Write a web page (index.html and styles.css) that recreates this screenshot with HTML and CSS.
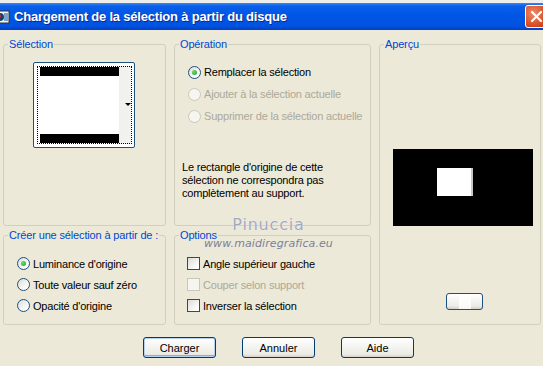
FILE: index.html
```html
<!DOCTYPE html>
<html lang="fr">
<head>
    <meta charset="UTF-8">
    <title>Chargement de la sélection à partir du disque</title>
    <link rel="stylesheet" href="styles.css">
</head>
<body>
    <div class="window">
        <div class="titlebar">
            <svg class="app-icon" width="16" height="16" viewBox="0 0 16 16">
                <rect x="1" y="2" width="14" height="12" fill="#f4f4f4" stroke="#333" stroke-width="1"/>
                <circle cx="6" cy="8" r="4" fill="#1b3d6e"/>
                <circle cx="5" cy="7" r="2" fill="#c0392b"/>
                <rect x="10" y="4" width="4" height="8" fill="#6fa6d8"/>
            </svg>
            <span class="title">Chargement de la sélection à partir du disque</span>
            <span class="close-btn">
                <svg width="21" height="21" viewBox="0 0 21 21">
                    <path d="M6 6 L15 15 M15 6 L6 15" stroke="#fff" stroke-width="2.2" stroke-linecap="round"/>
                </svg>
            </span>
        </div>

        <div class="dialog">
            <div class="groups">
                <fieldset class="group g-selection">
                    <legend>Sélection</legend>
                    <div class="sel-thumb">
                        <div class="thumb-img">
                            <div class="bar"></div>
                            <div class="bar"></div>
                        </div>
                        <span class="thumb-arrow"></span>
                    </div>
                </fieldset>

                <fieldset class="group g-operation">
                    <legend>Opération</legend>
                    <div class="choices">
                        <label class="choice"><span class="radio checked"></span>Remplacer la sélection</label>
                        <label class="choice disabled"><span class="radio"></span>Ajouter à la sélection actuelle</label>
                        <label class="choice disabled"><span class="radio"></span>Supprimer de la sélection actuelle</label>
                    </div>
                    <p class="note">Le rectangle d'origine de cette<br>sélection ne correspondra pas<br>complètement au support.</p>
                </fieldset>

                <fieldset class="group g-preview">
                    <legend>Aperçu</legend>
                    <div class="preview">
                        <div class="preview-rect"></div>
                    </div>
                    <span class="mini-btn"></span>
                </fieldset>

                <fieldset class="group g-source">
                    <legend>Créer une sélection à partir de :</legend>
                    <div class="choices tight">
                        <label class="choice"><span class="radio checked"></span>Luminance d'origine</label>
                        <label class="choice"><span class="radio"></span>Toute valeur sauf zéro</label>
                        <label class="choice"><span class="radio"></span>Opacité d'origine</label>
                    </div>
                </fieldset>

                <fieldset class="group g-options">
                    <legend>Options</legend>
                    <div class="choices tight">
                        <label class="choice"><span class="check"></span>Angle supérieur gauche</label>
                        <label class="choice disabled"><span class="check"></span>Couper selon support</label>
                        <label class="choice"><span class="check"></span>Inverser la sélection</label>
                    </div>
                </fieldset>
            </div>

            <div class="buttons">
                <button class="btn default">Charger</button>
                <button class="btn">Annuler</button>
                <button class="btn">Aide</button>
            </div>

            <div class="watermark">
                <span class="wm-name">Pinuccia</span>
                <span class="wm-site">www.maidiregrafica.eu</span>
            </div>
        </div>
    </div>
</body>
</html>
```

FILE: styles.css
```css
body {
    margin: 0;
    background: #ece9d8;
    font-family: 'Liberation Sans', Arial, sans-serif;
    font-size: 11px;
    color: #000;
    overflow: hidden;
}
.window {
    width: 543px;
    height: 366px;
    border-top: 3px solid #eeeeea;
    box-sizing: border-box;
    overflow: hidden;
}
.titlebar {
    height: 27px;
    display: flex;
    align-items: center;
    background: linear-gradient(#3b86f2 0, #0a5fe8 3px, #0056e6 45%, #0052e0 85%, #0041c4 100%);
    color: #fff;
}
.app-icon {
    margin-left: -6px;
    flex: none;
}
.title {
    margin-left: 4px;
    font-weight: bold;
    font-size: 13px;
    letter-spacing: -0.2px;
    text-shadow: 1px 1px 0 #0a2a8a;
    flex: 1;
    white-space: nowrap;
}
.close-btn {
    flex: none;
    width: 21px;
    height: 21px;
    margin-right: -5px;
    border: 1px solid #fff;
    border-radius: 3px;
    background: radial-gradient(circle at 35% 35%, #ee8b6a, #d6461d 70%, #c2390f);
    display: flex;
}
.dialog {
    position: relative;
    padding: 8px 0 0 3px;
}
.groups {
    display: grid;
    grid-template-columns: 163px 197px 162px;
    grid-template-rows: 188px 96px;
    column-gap: 8px;
    row-gap: 3px;
}
.group {
    margin: 0;
    padding: 0;
    min-width: 0;
    border: 1px solid #d0d0bf;
    border-radius: 3px;
    box-sizing: border-box;
}
.group legend {
    color: #0046d5;
    line-height: 13px;
    padding: 0 1px;
    margin-left: 4px;
    letter-spacing: -0.15px;
}
.g-preview {
    grid-column: 3;
    grid-row: 1 / span 2;
}

/* Sélection */
.sel-thumb {
    position: relative;
    margin: 11px 0 0 29px;
    width: 102px;
    height: 86px;
    box-sizing: border-box;
    border: 1px solid #1c5180;
    border-radius: 2px;
    background: #fff;
    padding: 3px;
}
.thumb-img {
    box-sizing: border-box;
    height: 78px;
    width: 95px;
    border: 1px dotted #000;
    display: flex;
    flex-direction: column;
    justify-content: space-between;
    padding: 0 12px 0 2px;
    background: linear-gradient(90deg, #fff 0 81px, #f1f1ee 81px);
}
.bar {
    height: 9px;
    background: #000;
}
.thumb-arrow {
    position: absolute;
    right: 3px;
    top: 40px;
    border-left: 3px solid transparent;
    border-right: 3px solid transparent;
    border-top: 3px solid #000;
}

/* choices */
.choices {
    margin-top: 10px;
    padding-left: 13px;
    letter-spacing: -0.2px;
}
.choices.tight {
    margin-top: 11px;
}
.choice {
    display: flex;
    align-items: center;
    height: 22px;
    white-space: nowrap;
}
.tight .choice {
    height: 21px;
}
.g-options .choices {
    padding-left: 12px;
}
.choice.disabled {
    color: #aca899;
}
.radio, .check {
    flex: none;
    width: 13px;
    height: 13px;
    box-sizing: border-box;
    margin-right: 3px;
    border: 1px solid #1c5180;
    display: flex;
    align-items: center;
    justify-content: center;
}
.radio {
    border-radius: 50%;
    background: linear-gradient(135deg, #dcdcd4, #fff 80%);
}
.check {
    background: linear-gradient(135deg, #dcdcd7, #fff 85%);
}
.disabled .radio, .disabled .check {
    border-color: #cac8bb;
    background: #f6f5f0;
}
.radio.checked::after {
    content: "";
    width: 5px;
    height: 5px;
    border-radius: 50%;
    background: radial-gradient(circle at 35% 35%, #6ddb6d, #21a121);
}
.note {
    margin: 34px 0 0 7px;
    line-height: 13px;
    letter-spacing: -0.2px;
}

/* Aperçu */
.preview {
    margin: 98px 0 0 13px;
    width: 140px;
    height: 77px;
    background: #000;
    padding: 19px 0 0 44px;
    box-sizing: border-box;
}
.preview-rect {
    width: 36px;
    height: 28px;
    background: linear-gradient(90deg, #fff 34px, #c8c8c8 34px);
}
.mini-btn {
    display: block;
    margin: 67px 0 0 66px;
    width: 37px;
    height: 17px;
    box-sizing: border-box;
    border: 1px solid #1c5180;
    border-radius: 3px;
    background:
        linear-gradient(90deg, transparent 12px, rgba(255,255,255,0.8) 12px 24px, transparent 24px),
        linear-gradient(#fff, #ecebe6 80%, #d6d0c5);
}

/* buttons */
.buttons {
    display: flex;
    gap: 26px;
    padding: 12px 0 0 140px;
}
.btn {
    width: 73px;
    height: 21px;
    padding: 0;
    border: 1px solid #003c74;
    border-radius: 3px;
    background: linear-gradient(#fff, #f3f3ef 50%, #ecebe6 85%, #d6d0c5);
    font-family: 'Liberation Sans', Arial, sans-serif;
    font-size: 11px;
    color: #000;
}
.btn.default {
    box-shadow: inset 0 0 0 1px #b8d0f0, inset 0 -1px 0 1px #89ade4;
}

/* watermark */
.watermark {
    position: absolute;
    left: 204px;
    top: 186px;
    display: flex;
    flex-direction: column;
    align-items: center;
    pointer-events: none;
}
.wm-name {
    font-family: 'DejaVu Sans', sans-serif;
    font-size: 16px;
    color: #a3a8c2;
    letter-spacing: 0.8px;
    text-shadow: 0 0 1px #fff;
    line-height: 17px;
}
.wm-site {
    margin-top: 4px;
    font-family: 'DejaVu Sans', sans-serif;
    font-style: italic;
    font-size: 11px;
    color: #7e8096;
    letter-spacing: 0.1px;
}
```
